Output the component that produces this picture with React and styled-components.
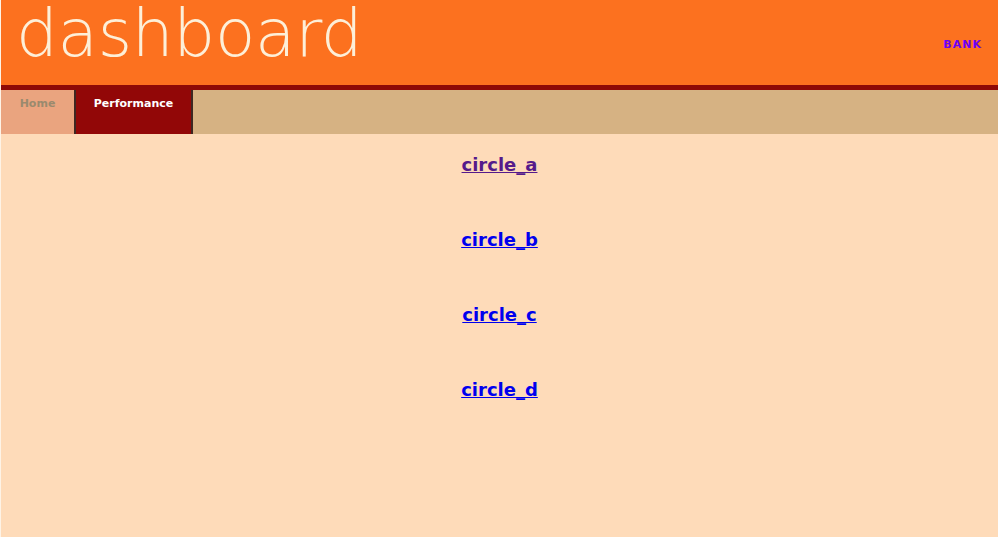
import React from 'react';
import styled, { createGlobalStyle } from 'styled-components';

const links = [
  { id: 'a', label: 'circle_a', visited: true },
  { id: 'b', label: 'circle_b' },
  { id: 'c', label: 'circle_c' },
  { id: 'd', label: 'circle_d' },
];

function App() {
  return (
    <Page>
      <GlobalStyle />
      <Header>
        <Logo>dashboard</Logo>
        <BankLink href='#'>BANK</BankLink>
      </Header>
      <Nav>
        <Tab width='73px'>Home</Tab>
        <Tab width='115px' active>
          Performance
        </Tab>
      </Nav>
      <Content>
        {links.map(({ id, label, visited }) => (
          <CircleLink key={id} href='#' visited={visited ? 1 : 0}>
            {label}
          </CircleLink>
        ))}
      </Content>
    </Page>
  );
}

export default App;

const GlobalStyle = createGlobalStyle`
  html, body {
    margin: 0;
    padding: 0;
    background: #fef3e6;
  }
`;

const Page = styled.div`
  margin-left: 1px;
  height: 537px;
  display: flex;
  flex-direction: column;
  background-color: #fedbb9;
  font-family: 'DejaVu Sans', Verdana, sans-serif;
`;

const Header = styled.div`
  height: 85px;
  background-color: #fc711f;
  border-bottom: 5px solid #8e0a06;
  display: flex;
  justify-content: space-between;
  align-items: flex-start;
  box-sizing: content-box;
`;

const Logo = styled.div`
  margin: 1px 0 0 15px;
  font-family: 'DejaVu Sans', sans-serif;
  font-weight: 200;
  font-size: 66px;
  letter-spacing: -0.3px;
  color: #fdefd8;
  line-height: 1;
`;

const BankLink = styled.a`
  margin: 38px 16px 0 0;
  font-size: 11px;
  font-weight: bold;
  letter-spacing: 1px;
  color: #6a00f4;
  text-decoration: none;
`;

const Nav = styled.div`
  height: 44px;
  display: flex;
  background-color: #d6b283;
`;

const Tab = styled.div`
  width: ${(p) => p.width};
  box-sizing: content-box;
  text-align: center;
  font-size: 11px;
  font-weight: bold;
  line-height: 28px;
  border-right: 2px solid #3e2722;
  color: ${(p) => (p.active ? '#ffffff' : '#9a8a6e')};
  background-color: ${(p) => (p.active ? '#920707' : '#eaa47f')};
`;

const Content = styled.div`
  flex: 1;
  display: flex;
  flex-direction: column;
  align-items: center;
  padding-top: 19px;
  gap: 51px;
`;

const CircleLink = styled.a`
  font-size: 18px;
  font-weight: bold;
  line-height: 24px;
  color: ${(p) => (p.visited ? '#551a8b' : '#0000ee')};
  text-decoration: underline;
`;
